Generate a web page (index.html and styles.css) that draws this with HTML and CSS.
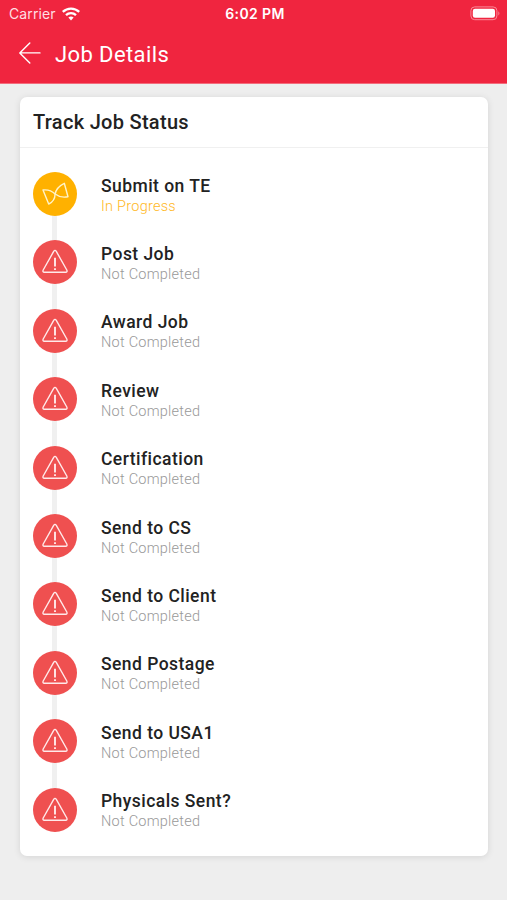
FILE: index.html
```html
<!DOCTYPE html>
<html lang="en">
<head>
  <meta charset="UTF-8">
  <title>Job Details</title>
  <meta name="viewport" content="width=device-width, initial-scale=1">
  <link rel="stylesheet" href="styles.css">
</head>
<body>
  <svg class="symbols" aria-hidden="true">
    <symbol id="warning" viewBox="0 0 44 44">
      <path d="M20.7 11.4Q22 9.4 23.3 11.4L33.8 30Q34.7 32 32.6 32.2H11.4Q9.3 32 10.2 30Z"/>
      <path d="M22 17.8V26.6M22 28.2V30" stroke-width="1.9"/>
    </symbol>
  </svg>

  <header>
    <div class="statusbar">
      <div class="carrier">
        <span>Carrier</span>
        <svg width="18" height="14" viewBox="0 0 18 14" fill="none" stroke="#fff" stroke-width="2.3">
          <path d="M.8 4.9C5.4.5 12.6.5 17.2 4.9"/>
          <path d="M4 8.1C6.8 5.4 11.2 5.4 14 8.1"/>
          <path d="M6.4 10.6Q9 8.3 11.6 10.6L9 13.4Z" fill="#fff" stroke="none"/>
        </svg>
      </div>
      <span class="time">6:02 PM</span>
      <svg class="battery" width="31" height="15" viewBox="0 0 31 15">
        <rect x=".9" y=".9" width="26" height="12.8" rx="3.8" fill="none" stroke="#f98b99" stroke-width="1"/>
        <rect x="2.8" y="2.8" width="22.2" height="9" rx="2.2" fill="#fff"/>
        <path d="M28.4 5.2Q30.4 7.3 28.4 9.4Z" fill="#f98b99"/>
      </svg>
    </div>
    <div class="navbar">
      <svg width="22" height="22" viewBox="0 0 22 22" fill="none" stroke="#fff" stroke-width="1.4" stroke-linecap="round" stroke-linejoin="round">
        <path d="M10.8 .9L.8 10.9L10.8 20.9M.8 10.9H21"/>
      </svg>
      <h1>Job Details</h1>
    </div>
  </header>

  <main class="card">
    <h2>Track Job Status</h2>
    <ul class="steps">
      <li class="step progress">
        <svg class="icon" viewBox="0 0 44 44">
          <path d="M10 18L15.7 32C19.5 30.3 22 27.5 22.1 22C18.8 18.8 15 17.4 10 18Z"/>
          <path d="M31.3 11.3L35 24.7C30.2 25.8 26 25 22.1 22C23 17.2 26.5 13.6 31.3 11.3Z"/>
        </svg>
        <div class="text"><h3>Submit on TE</h3><p>In Progress</p></div>
      </li>
      <li class="step">
        <svg class="icon"><use href="#warning"/></svg>
        <div class="text"><h3>Post Job</h3><p>Not Completed</p></div>
      </li>
      <li class="step">
        <svg class="icon"><use href="#warning"/></svg>
        <div class="text"><h3>Award Job</h3><p>Not Completed</p></div>
      </li>
      <li class="step">
        <svg class="icon"><use href="#warning"/></svg>
        <div class="text"><h3>Review</h3><p>Not Completed</p></div>
      </li>
      <li class="step">
        <svg class="icon"><use href="#warning"/></svg>
        <div class="text"><h3>Certification</h3><p>Not Completed</p></div>
      </li>
      <li class="step">
        <svg class="icon"><use href="#warning"/></svg>
        <div class="text"><h3>Send to CS</h3><p>Not Completed</p></div>
      </li>
      <li class="step">
        <svg class="icon"><use href="#warning"/></svg>
        <div class="text"><h3>Send to Client</h3><p>Not Completed</p></div>
      </li>
      <li class="step">
        <svg class="icon"><use href="#warning"/></svg>
        <div class="text"><h3>Send Postage</h3><p>Not Completed</p></div>
      </li>
      <li class="step">
        <svg class="icon"><use href="#warning"/></svg>
        <div class="text"><h3>Send to USA1</h3><p>Not Completed</p></div>
      </li>
      <li class="step">
        <svg class="icon"><use href="#warning"/></svg>
        <div class="text"><h3>Physicals Sent?</h3><p>Not Completed</p></div>
      </li>
    </ul>
  </main>
</body>
</html>
```
FILE: styles.css
```css
* {
  box-sizing: border-box;
}
body {
  margin: 0;
  height: 900px;
  background: #eeeeee;
  font-family: Roboto, sans-serif;
  color: #222;
  overflow: hidden;
}
h1, h2, h3, p, ul {
  margin: 0;
  padding: 0;
}
.symbols {
  display: none;
}
header {
  height: 84px;
  background: #f0253f;
  border-bottom: 1px solid #f36c7c;
  color: #fff;
}
.statusbar {
  display: grid;
  grid-template-columns: 1fr auto 1fr;
  align-items: center;
  height: 27px;
  padding: 0 6px 0 9px;
  font-family: Inter, sans-serif;
  font-size: 14px;
}
.carrier {
  display: flex;
  align-items: center;
  gap: 6px;
  color: #ffdfe3;
  letter-spacing: 0.1px;
}
.time {
  font-weight: 600;
  font-size: 14px;
  letter-spacing: 0.4px;
}
.battery {
  justify-self: end;
}
.navbar {
  display: flex;
  align-items: center;
  gap: 14px;
  height: 54px;
  padding-left: 19px;
}
.navbar svg {
  margin-bottom: 2px;
}
h1 {
  font-size: 22px;
  font-weight: 400;
  letter-spacing: 0.4px;
}
.card {
  width: 468px;
  height: 759px;
  margin: 13px 0 0 20px;
  background: #fff;
  border-radius: 7px;
  box-shadow: 0 1px 7px rgba(0, 0, 0, 0.11);
}
h2 {
  height: 51px;
  padding-left: 13px;
  border-bottom: 1px solid #f0f0f0;
  font-size: 20px;
  font-weight: 500;
  line-height: 51px;
  letter-spacing: 0.3px;
}
.steps {
  padding: 24px 13px 0;
  list-style: none;
}
.step {
  display: flex;
  gap: 24px;
  height: 68.4px;
  /* connector line to the next step */
  background: linear-gradient(#f0f0f0, #f0f0f0) 19px 0 / 5px 100% no-repeat;
}
.step:last-child {
  background: none;
}
.icon {
  width: 44px;
  height: 44px;
  border-radius: 50%;
  background: #ef5050;
  fill: none;
  stroke: #ffe9e9;
  stroke-width: 1.4;
  stroke-linejoin: round;
}
.progress .icon {
  background: #ffb100;
  stroke: #fff3c9;
}
.text {
  padding-top: 3.6px;
}
h3 {
  font-size: 17.5px;
  font-weight: 500;
  line-height: 20px;
  letter-spacing: 0.45px;
}
p {
  font-size: 14.5px;
  font-weight: 300;
  line-height: 21px;
  letter-spacing: 0.25px;
  color: #999;
}
.progress p {
  color: #ffb825;
}
```
